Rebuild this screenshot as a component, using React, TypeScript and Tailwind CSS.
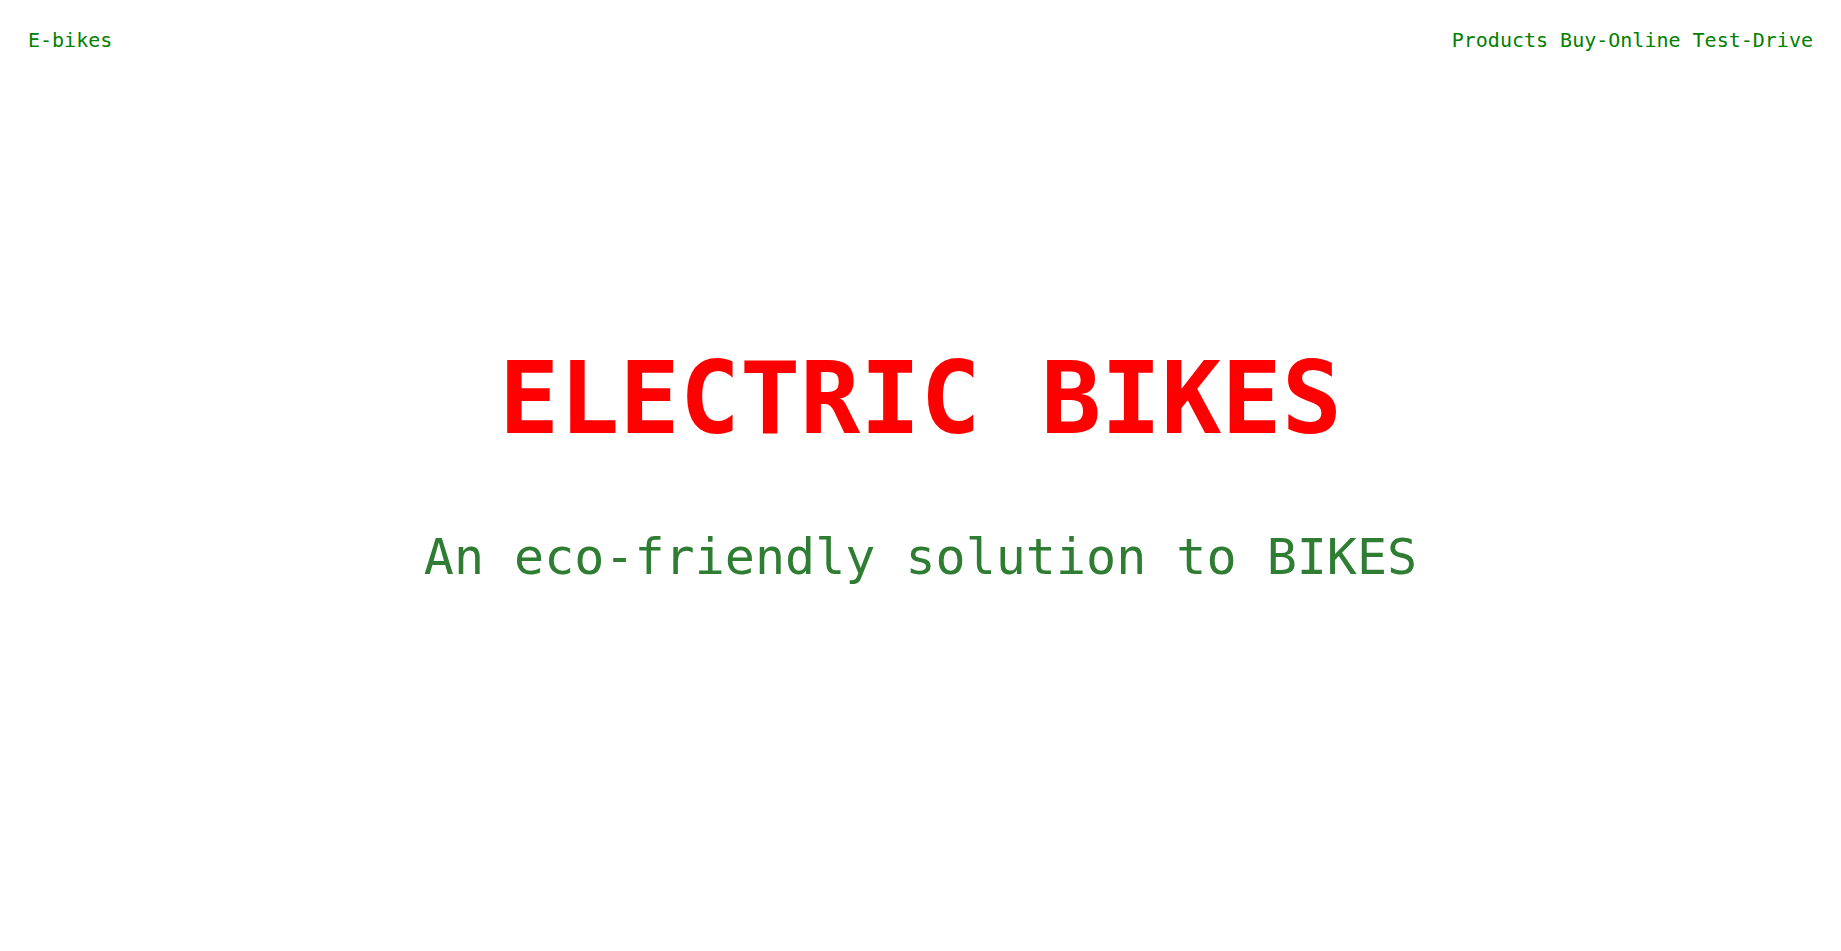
import React from "react";

export default function App() {
  return (
    <div className="min-h-[951px] w-full bg-white font-['DejaVu_Sans_Mono',monospace]">
      <header className="flex items-start justify-between px-7 pt-[26px] text-[20px] leading-[28px] text-[#008000]">
        <div>E-bikes</div>
        <nav className="whitespace-pre">
          <a>Products</a> <a>Buy-Online</a> <a>Test-Drive</a>
        </nav>
      </header>
      <main className="mt-[287px] flex flex-col items-center text-center">
        <h1 className="text-[100px] font-bold leading-[116px] text-[#ff0000]">ELECTRIC BIKES</h1>
        <p className="mt-[71px] text-[50px] leading-[58px] text-[#2e7d32]">An eco-friendly solution to BIKES</p>
      </main>
    </div>
  );
}
